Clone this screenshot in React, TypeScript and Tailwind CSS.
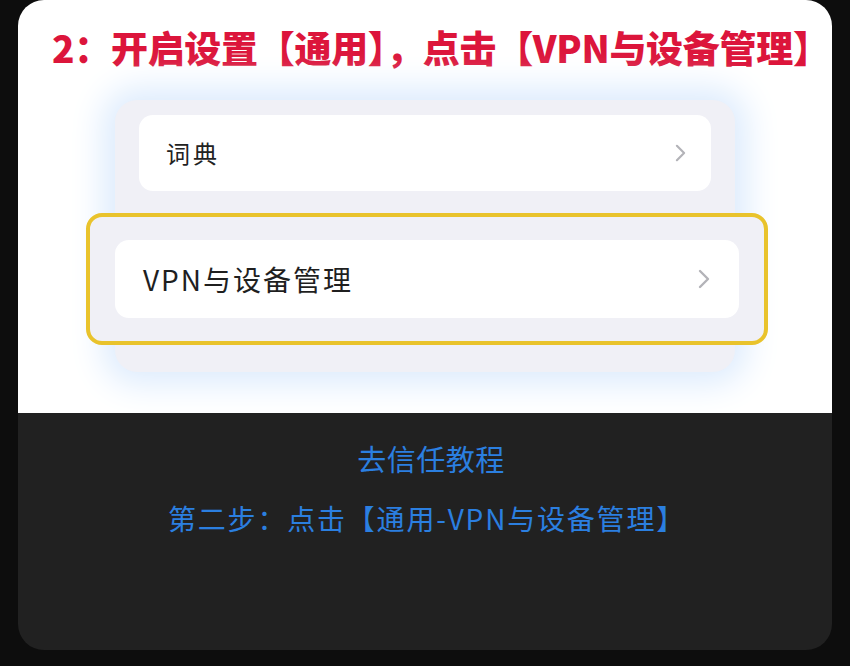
const cjk = "font-['Noto_Sans_CJK_SC','Noto_Sans',sans-serif]"

function Chevron({ className }: { className?: string }) {
  return (
    <svg viewBox="0 0 12 20" className={className} fill="none">
      <path d="M2 2l8 8-8 8" stroke="#b3b3b8" strokeWidth="2.4" strokeLinecap="round" strokeLinejoin="round" />
    </svg>
  )
}

export default function App() {
  return (
    <div className={`h-[666px] w-[850px] bg-[#0d0d0d] px-[18px] pb-[16px] ${cjk}`}>
      <div className="flex h-[650px] flex-col overflow-hidden rounded-[26px]">
        <div className="flex h-[413px] flex-col items-center bg-white">
          <h1 className="ml-[34px] mt-[26px] self-start whitespace-nowrap text-[37px] font-black leading-[42px] tracking-[-0.3px] text-[#dc153b]">
            2：开启设置【通用】，点击【VPN与设备管理】
          </h1>

          <div className="mt-[32px] flex w-[620px] flex-col rounded-[22px] bg-[#f0f0f6] pb-[27px] pt-[15px] shadow-[0_0_34px_12px_#dcebfd]">
            <div className="mx-[24px] flex h-[76px] items-center justify-between rounded-[14px] bg-white pl-[27px] pr-[25px]">
              <span className="text-[24px] tracking-[3px] text-[#222]">词典</span>
              <Chevron className="h-[18px] w-[11px]" />
            </div>

            <div className="-ml-[29px] -mr-[33px] mt-[22px] flex h-[132px] items-center rounded-[16px] border-[4px] border-[#e9c32c] bg-[#f0f0f6] px-[25px]">
              <div className="flex h-[78px] flex-1 items-center justify-between rounded-[14px] bg-white pl-[28px] pr-[29px]">
                <span className="text-[28px] tracking-[2px] text-[#1f1f1f]">VPN与设备管理</span>
                <Chevron className="h-[20px] w-[12px]" />
              </div>
            </div>
          </div>
        </div>

        <div className="flex flex-1 flex-col items-center bg-[#212121] pt-[26px]">
          <p className="ml-[12px] text-[29px] leading-[38px] tracking-[0.5px] text-[#2b7fe0]">去信任教程</p>
          <p className="ml-[4px] mt-[22px] text-[28px] leading-[38px] tracking-[1.8px] text-[#2b7fe0]">第二步：点击【通用-VPN与设备管理】</p>
        </div>
      </div>
    </div>
  )
}
